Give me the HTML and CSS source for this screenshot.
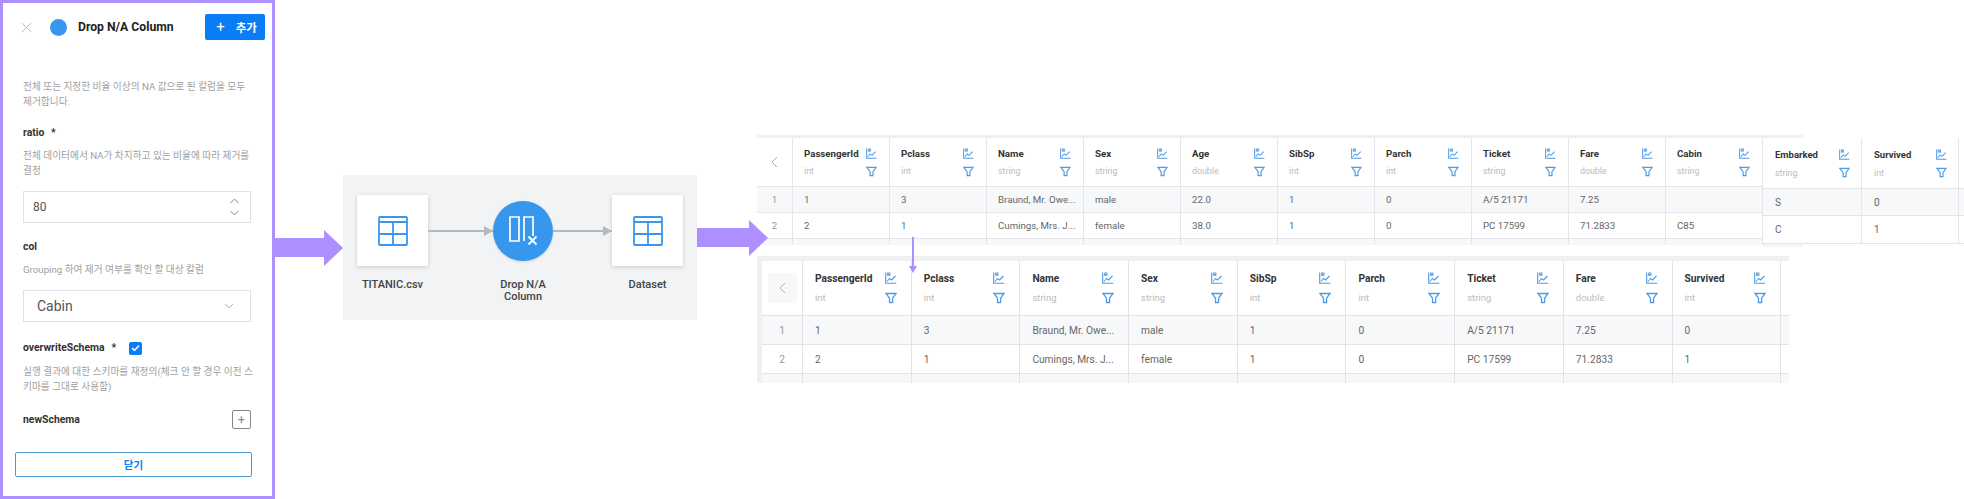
FILE: index.html
```html
<!DOCTYPE html>
<html lang="ko">
<head>
<meta charset="UTF-8">
<title>Drop N/A Column</title>
<link rel="stylesheet" href="styles.css">
</head>
<body>
<svg class="defs" width="0" height="0">
    <symbol id="i-chart" viewBox="0 0 12 12"><path d="M.7.5v10.8h10.6M2 9.5l2.6-3 2 1.5L10.5 4" fill="none" stroke="currentColor" stroke-width="1.1"/><rect x="2" y=".5" width="3.5" height="3.5" fill="currentColor" opacity=".8"/></symbol>
    <symbol id="i-filter" viewBox="0 0 12 12"><path d="M1 1.5h10L7.6 6.2v4.3H4.5V6.2z" fill="none" stroke="currentColor" stroke-width="1.3"/></symbol>
    <symbol id="i-table" viewBox="0 0 30 30"><path d="M2 1h26a1 1 0 0 1 1 1v26a1 1 0 0 1-1 1H2a1 1 0 0 1-1-1V2a1 1 0 0 1 1-1zM1 6h28M1 18h28M15 6v23" fill="none" stroke="#3a97ee" stroke-width="1.8"/></symbol>
</svg>

<!-- option panel -->
<section class="panel">
    <header class="panel-head">
        <svg class="close" width="11" height="11" viewBox="0 0 12 12"><path d="M1 1l10 10M11 1L1 11" stroke="#b9b9b9" fill="none"/></svg>
        <span class="dot"></span>
        <h1>Drop N/A Column</h1>
        <button class="add"><span class="plus">+</span> 추가</button>
    </header>
    <div class="panel-body">
        <p class="hint intro">전체 또는 지정한 비율 이상의 NA 값으로 된 칼럼을 모두<br>제거합니다.</p>
        <div class="label label-ratio">ratio <i>*</i></div>
        <p class="hint">전체 데이터에서 NA가 차지하고 있는 비율에 따라 제거를<br>결정</p>
        <div class="field">
            <span class="val-num">80</span>
            <svg width="9" height="18" viewBox="0 0 9 18"><path d="M.5 5l4-4 4 4M.5 13l4 4 4-4" fill="none" stroke="#888"/></svg>
        </div>
        <div class="label label-col">col</div>
        <p class="hint">Grouping 하여 제거 여부를 확인 할 대상 칼럼</p>
        <div class="field">
            <span class="val-text">Cabin</span>
            <svg class="caret" width="10" height="6" viewBox="0 0 10 6"><path d="M1 1l4 4 4-4" fill="none" stroke="#b5b5b5"/></svg>
        </div>
        <div class="label label-over">overwriteSchema <i>*</i>
            <span class="check"><svg width="9" height="8" viewBox="0 0 9 8"><path d="M1 4l2.5 2.5L8 1.5" fill="none" stroke="#fff" stroke-width="1.5"/></svg></span>
        </div>
        <p class="hint">실행 결과에 대한 스키마를 재정의(체크 안 할 경우 이전 스<br>키마를 그대로 사용함)</p>
        <div class="schema-row">
            <div class="label">newSchema</div>
            <span class="schema-add">+</span>
        </div>
    </div>
    <button class="done">닫기</button>
</section>

<!-- workflow -->
<section class="flow">
    <div class="flow-item">
        <div class="node"><svg width="30" height="30"><use href="#i-table"/></svg></div>
        <div class="node-name">TITANIC.csv</div>
    </div>
    <div class="link link-in"></div>
    <div class="flow-item flow-mid">
        <div class="node-round">
            <svg width="30" height="30" viewBox="0 0 30 30"><path d="M2 1h9v24H2zM16 25V1h9v19" fill="none" stroke="#fff" stroke-width="1.7"/><path d="M20.5 20.5l8 8M28.5 20.5l-8 8" stroke="#fff" stroke-width="2"/></svg>
        </div>
        <div class="node-name">Drop N/A<br>Column</div>
    </div>
    <div class="link link-out"></div>
    <div class="flow-item">
        <div class="node"><svg width="30" height="30"><use href="#i-table"/></svg></div>
        <div class="node-name">Dataset</div>
    </div>
</section>

<!-- purple connectors -->
<div class="arrow arrow-a"></div>
<div class="arrow arrow-b"></div>
<div class="arrow-down"></div>

<!-- source table -->
<section class="grid grid-top">
    <div class="row head">
        <div class="cell idx"><svg width="7" height="12" viewBox="0 0 7 12"><path d="M6 1L1 6l5 5" fill="none" stroke="#aaa"/></svg></div>
        <div class="cell"><div><b>PassengerId</b><small>int</small></div><span class="tools"><svg width="11" height="11"><use href="#i-chart"/></svg><svg width="11" height="11"><use href="#i-filter"/></svg></span></div>
        <div class="cell"><div><b>Pclass</b><small>int</small></div><span class="tools"><svg width="11" height="11"><use href="#i-chart"/></svg><svg width="11" height="11"><use href="#i-filter"/></svg></span></div>
        <div class="cell"><div><b>Name</b><small>string</small></div><span class="tools"><svg width="11" height="11"><use href="#i-chart"/></svg><svg width="11" height="11"><use href="#i-filter"/></svg></span></div>
        <div class="cell"><div><b>Sex</b><small>string</small></div><span class="tools"><svg width="11" height="11"><use href="#i-chart"/></svg><svg width="11" height="11"><use href="#i-filter"/></svg></span></div>
        <div class="cell"><div><b>Age</b><small>double</small></div><span class="tools"><svg width="11" height="11"><use href="#i-chart"/></svg><svg width="11" height="11"><use href="#i-filter"/></svg></span></div>
        <div class="cell"><div><b>SibSp</b><small>int</small></div><span class="tools"><svg width="11" height="11"><use href="#i-chart"/></svg><svg width="11" height="11"><use href="#i-filter"/></svg></span></div>
        <div class="cell"><div><b>Parch</b><small>int</small></div><span class="tools"><svg width="11" height="11"><use href="#i-chart"/></svg><svg width="11" height="11"><use href="#i-filter"/></svg></span></div>
        <div class="cell"><div><b>Ticket</b><small>string</small></div><span class="tools"><svg width="11" height="11"><use href="#i-chart"/></svg><svg width="11" height="11"><use href="#i-filter"/></svg></span></div>
        <div class="cell"><div><b>Fare</b><small>double</small></div><span class="tools"><svg width="11" height="11"><use href="#i-chart"/></svg><svg width="11" height="11"><use href="#i-filter"/></svg></span></div>
        <div class="cell"><div><b>Cabin</b><small>string</small></div><span class="tools"><svg width="11" height="11"><use href="#i-chart"/></svg><svg width="11" height="11"><use href="#i-filter"/></svg></span></div>
    </div>
    <div class="row odd">
        <div class="cell idx">1</div><div class="cell">1</div><div class="cell">3</div><div class="cell">Braund, Mr. Owe...</div><div class="cell">male</div><div class="cell">22.0</div><div class="cell">1</div><div class="cell">0</div><div class="cell">A/5 21171</div><div class="cell">7.25</div><div class="cell"></div>
    </div>
    <div class="row">
        <div class="cell idx">2</div><div class="cell">2</div><div class="cell">1</div><div class="cell">Cumings, Mrs. J...</div><div class="cell">female</div><div class="cell">38.0</div><div class="cell">1</div><div class="cell">0</div><div class="cell">PC 17599</div><div class="cell">71.2833</div><div class="cell">C85</div>
    </div>
    <div class="row odd">
        <div class="cell idx"></div><div class="cell"></div><div class="cell"></div><div class="cell"></div><div class="cell"></div><div class="cell"></div><div class="cell"></div><div class="cell"></div><div class="cell"></div><div class="cell"></div><div class="cell"></div>
    </div>
</section>

<!-- right part of source table, pasted beside it -->
<section class="grid grid-ext">
    <div class="row head">
        <div class="cell"><div><b>Embarked</b><small>string</small></div><span class="tools"><svg width="11" height="11"><use href="#i-chart"/></svg><svg width="11" height="11"><use href="#i-filter"/></svg></span></div>
        <div class="cell"><div><b>Survived</b><small>int</small></div><span class="tools"><svg width="11" height="11"><use href="#i-chart"/></svg><svg width="11" height="11"><use href="#i-filter"/></svg></span></div>
    </div>
    <div class="row odd"><div class="cell">S</div><div class="cell">0</div></div>
    <div class="row"><div class="cell">C</div><div class="cell">1</div></div>
</section>

<!-- result table -->
<section class="grid grid-result">
    <div class="row head">
        <div class="cell idx"><span class="prev"><svg width="7" height="12" viewBox="0 0 7 12"><path d="M6 1L1 6l5 5" fill="none" stroke="#aaa"/></svg></span></div>
        <div class="cell"><div><b>PassengerId</b><small>int</small></div><span class="tools"><svg width="12" height="12"><use href="#i-chart"/></svg><svg width="12" height="12"><use href="#i-filter"/></svg></span></div>
        <div class="cell"><div><b>Pclass</b><small>int</small></div><span class="tools"><svg width="12" height="12"><use href="#i-chart"/></svg><svg width="12" height="12"><use href="#i-filter"/></svg></span></div>
        <div class="cell"><div><b>Name</b><small>string</small></div><span class="tools"><svg width="12" height="12"><use href="#i-chart"/></svg><svg width="12" height="12"><use href="#i-filter"/></svg></span></div>
        <div class="cell"><div><b>Sex</b><small>string</small></div><span class="tools"><svg width="12" height="12"><use href="#i-chart"/></svg><svg width="12" height="12"><use href="#i-filter"/></svg></span></div>
        <div class="cell"><div><b>SibSp</b><small>int</small></div><span class="tools"><svg width="12" height="12"><use href="#i-chart"/></svg><svg width="12" height="12"><use href="#i-filter"/></svg></span></div>
        <div class="cell"><div><b>Parch</b><small>int</small></div><span class="tools"><svg width="12" height="12"><use href="#i-chart"/></svg><svg width="12" height="12"><use href="#i-filter"/></svg></span></div>
        <div class="cell"><div><b>Ticket</b><small>string</small></div><span class="tools"><svg width="12" height="12"><use href="#i-chart"/></svg><svg width="12" height="12"><use href="#i-filter"/></svg></span></div>
        <div class="cell"><div><b>Fare</b><small>double</small></div><span class="tools"><svg width="12" height="12"><use href="#i-chart"/></svg><svg width="12" height="12"><use href="#i-filter"/></svg></span></div>
        <div class="cell"><div><b>Survived</b><small>int</small></div><span class="tools"><svg width="12" height="12"><use href="#i-chart"/></svg><svg width="12" height="12"><use href="#i-filter"/></svg></span></div>
    </div>
    <div class="row odd">
        <div class="cell idx">1</div><div class="cell">1</div><div class="cell">3</div><div class="cell">Braund, Mr. Owe...</div><div class="cell">male</div><div class="cell">1</div><div class="cell">0</div><div class="cell">A/5 21171</div><div class="cell">7.25</div><div class="cell">0</div>
    </div>
    <div class="row">
        <div class="cell idx">2</div><div class="cell">2</div><div class="cell">1</div><div class="cell">Cumings, Mrs. J...</div><div class="cell">female</div><div class="cell">1</div><div class="cell">0</div><div class="cell">PC 17599</div><div class="cell">71.2833</div><div class="cell">1</div>
    </div>
    <div class="row odd">
        <div class="cell idx"></div><div class="cell"></div><div class="cell"></div><div class="cell"></div><div class="cell"></div><div class="cell"></div><div class="cell"></div><div class="cell"></div><div class="cell"></div><div class="cell"></div>
    </div>
</section>
</body>
</html>
```

FILE: styles.css
```css
/* Global */
html, body {
    margin: 0;
    padding: 0;
    background: #fff;
}

body {
    position: relative;
    width: 1964px;
    height: 499px;
    overflow: hidden;
    font-family: Roboto, "Noto Sans CJK KR", sans-serif;
    color: #333;
}

.defs {
    position: absolute;
}

/* Option panel */
.panel {
    position: absolute;
    left: 0;
    top: 0;
    width: 275px;
    height: 499px;
    box-sizing: border-box;
    border: 3px solid #ae8fff;
    background: #fff;
}

.panel-head {
    display: flex;
    align-items: center;
    height: 26px;
    margin-top: 11px;
    padding: 0 7px 0 18px;
}

.dot {
    width: 17px;
    height: 17px;
    margin-left: 18px;
    border-radius: 50%;
    background: #3797ee;
}

.panel-head h1 {
    flex: 1;
    margin: 0 0 0 11px;
    font-size: 12.2px;
    font-weight: 700;
    color: #222;
}

.add {
    display: flex;
    align-items: center;
    justify-content: center;
    gap: 11px;
    width: 60px;
    height: 26px;
    padding: 0 0 0 3px;
    border: 0;
    border-radius: 2px;
    background: #0a7cf5;
    color: #fff;
    font: 700 11.5px Roboto, "Noto Sans CJK KR", sans-serif;
}

.plus {
    font-size: 15px;
    font-weight: 400;
}

.panel-body {
    padding: 0 21px 0 20px;
}

.hint {
    margin: 0;
    font-size: 9.7px;
    line-height: 15px;
    color: #a0a0a0;
    white-space: nowrap;
}

.intro {
    margin-top: 39px;
}

.label {
    font-size: 10.4px;
    font-weight: 700;
    line-height: 16px;
    color: #333;
}

.label i {
    margin-left: 4px;
    font-style: normal;
}

.label-ratio {
    margin-top: 16px;
    margin-bottom: 7px;
}

.label-col {
    margin-top: 16px;
    margin-bottom: 7px;
}

.label-over {
    display: flex;
    align-items: center;
    margin-top: 18px;
    margin-bottom: 8px;
}

.label-over i {
    margin-left: 7px;
}

.check {
    display: flex;
    align-items: center;
    justify-content: center;
    width: 13px;
    height: 13px;
    margin-left: 13px;
    border-radius: 2px;
    background: #0a7cf5;
}

.field {
    display: flex;
    align-items: center;
    justify-content: space-between;
    box-sizing: border-box;
    height: 32px;
    margin-top: 13px;
    padding: 0 11px 0 9px;
    border: 1px solid #dfe1e4;
    font-size: 12px;
    color: #555;
}

.val-text {
    margin-left: 4px;
    font-size: 14px;
}

.caret {
    margin-right: 5px;
}

.schema-row {
    display: flex;
    align-items: center;
    justify-content: space-between;
    margin-top: 16px;
}

.schema-add {
    display: flex;
    align-items: center;
    justify-content: center;
    box-sizing: border-box;
    width: 19px;
    height: 19px;
    border: 1px solid #888;
    border-radius: 2px;
    font-size: 12px;
    color: #888;
}

.done {
    position: absolute;
    left: 12px;
    top: 449px;
    width: 237px;
    height: 25px;
    border: 1px solid #4b97cf;
    border-radius: 2px;
    background: #fff;
    color: #0a7cf5;
    font: 700 10.5px Roboto, "Noto Sans CJK KR", sans-serif;
}

/* Workflow */
.flow {
    position: absolute;
    left: 343px;
    top: 175px;
    display: flex;
    align-items: flex-start;
    box-sizing: border-box;
    width: 354px;
    height: 145px;
    padding: 20px 14px 0;
    background: #f1f3f5;
}

.flow-item {
    display: flex;
    flex-direction: column;
    align-items: center;
    flex: none;
    width: 71px;
}

.flow-mid {
    width: 60px;
}

.node {
    display: flex;
    align-items: center;
    justify-content: center;
    width: 71px;
    height: 71px;
    background: #fff;
    box-shadow: 0 1px 4px rgba(0, 0, 0, 0.18);
}

.node-round {
    display: flex;
    align-items: center;
    justify-content: center;
    width: 60px;
    height: 60px;
    margin: 6px 0 5px;
    border-radius: 50%;
    background: #3797ee;
    box-shadow: 0 1px 3px rgba(0, 0, 0, 0.12);
}

.node-name {
    flex: none;
    margin-top: 13px;
    width: 90px;
    font-size: 11px;
    font-weight: 500;
    line-height: 12px;
    color: #444;
    text-align: center;
}

.link {
    position: relative;
    flex: none;
    height: 0;
    margin-top: 35px;
    border-top: 2px solid #b5b8c0;
}

.link-in {
    width: 65px;
}

.link-out {
    width: 59px;
}

.link::after {
    content: "";
    position: absolute;
    right: 0;
    top: -6px;
    border-left: 9px solid #b5b8c0;
    border-top: 5px solid transparent;
    border-bottom: 5px solid transparent;
}

/* Purple connectors */
.arrow {
    position: absolute;
    height: 19px;
    background: #ae8fff;
}

.arrow::after {
    content: "";
    position: absolute;
    right: -19px;
    top: -8px;
    border-left: 19px solid #ae8fff;
    border-top: 18px solid transparent;
    border-bottom: 18px solid transparent;
}

.arrow-a {
    left: 275px;
    top: 238px;
    width: 49px;
}

.arrow-b {
    left: 697px;
    top: 228px;
    width: 52px;
    z-index: 3;
}

.arrow-down {
    position: absolute;
    left: 912px;
    top: 237px;
    z-index: 3;
    width: 2px;
    height: 31px;
    background: #ae8fff;
}

.arrow-down::after {
    content: "";
    position: absolute;
    left: -3px;
    top: 29px;
    border-top: 7px solid #ae8fff;
    border-left: 4px solid transparent;
    border-right: 4px solid transparent;
}

/* Data tables */
.grid {
    position: absolute;
    overflow: hidden;
    background: #fff;
    font-size: 9.7px;
    color: #666;
}

.row {
    display: flex;
    border-bottom: 1px solid #e3e5ea;
}

.odd {
    background: #f7f8fa;
}

.cell {
    display: flex;
    align-items: center;
    justify-content: space-between;
    flex: none;
    box-sizing: border-box;
    border-right: 1px solid #e3e5ea;
    padding: 0 10px 0 11px;
    white-space: nowrap;
}

.cell b {
    display: block;
    font-weight: 700;
    color: #333;
}

.cell small {
    display: block;
    font-size: 8.8px;
    color: #bbb;
}

.idx {
    justify-content: center;
    padding: 0;
    color: #999;
}

.tools {
    display: flex;
    flex-direction: column;
    color: #4e9be6;
}

.grid-top {
    left: 757px;
    top: 135px;
    width: 1046px;
    height: 107px;
    border-top: 3px solid #eff0f3;
}

.grid-top .head {
    height: 48px;
}

.grid-top .row {
    width: 1006px;
}

.grid-top .row:not(.head) {
    height: 25px;
}

.grid-top .cell {
    width: 97px;
}

.grid-top .idx {
    width: 36px;
}

.grid-top b {
    margin-bottom: 7px;
}

.grid-top .tools {
    gap: 7px;
    margin-right: 2px;
}

.grid-ext {
    left: 1763px;
    top: 138px;
    width: 201px;
    height: 109px;
    font-size: 10px;
}

.grid-ext::after {
    content: "";
    position: absolute;
    left: 0;
    bottom: 0;
    width: 40px;
    height: 3px;
    background: #f3f4f6;
}

.grid-ext .head {
    height: 50px;
}

.grid-ext .row:nth-child(2) {
    height: 26px;
}

.grid-ext .row:nth-child(3) {
    height: 27px;
}

.grid-ext .cell {
    width: 97px;
    padding-right: 11px;
    padding-left: 12px;
}

.grid-ext .cell:first-child {
    width: 99px;
}

.grid-ext b {
    margin-bottom: 8px;
    font-size: 9.5px;
}

.grid-ext .tools {
    gap: 7px;
}

.grid-result {
    left: 757px;
    top: 256px;
    width: 1032px;
    height: 127px;
    box-sizing: border-box;
    padding-left: 5px;
    border-top: 5px solid #eff0f3;
    background: #fff;
    font-size: 10.2px;
}

.grid-result::before {
    content: "";
    position: absolute;
    left: 0;
    top: 0;
    width: 5px;
    height: 100%;
    background: #eff0f3;
}

.grid-result .head {
    height: 54px;
}

.grid-result .row {
    border-color: #e1e3e6;
}

.grid-result .row:not(.head) {
    height: 28px;
}

.grid-result .cell {
    width: 108.7px;
    padding: 0 14px 0 12px;
    border-color: #e1e3e6;
}

.grid-result .idx {
    width: 41px;
    padding: 0;
}

.grid-result b {
    margin-bottom: 8px;
}

.grid-result small {
    font-size: 9.5px;
}

.grid-result .tools {
    gap: 8px;
}

.prev {
    display: flex;
    align-items: center;
    justify-content: center;
    width: 29px;
    height: 30px;
    background: #f8f8f9;
}
```
